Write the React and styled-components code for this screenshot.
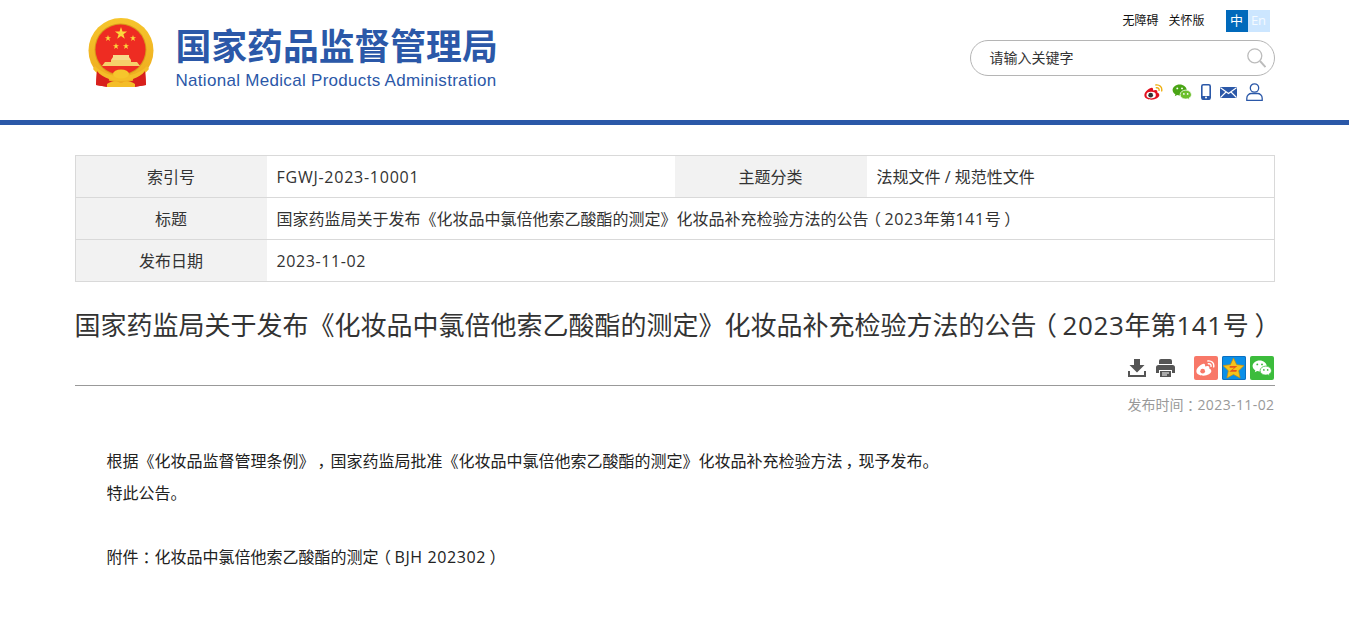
import React from "react";
import styled, { createGlobalStyle } from "styled-components";

const Global = createGlobalStyle`
  html, body { margin: 0; padding: 0; background: #fff; }
  body { font-family: "Open Sans", "Noto Sans CJK SC", sans-serif; color: #333; overflow-x: hidden; }
`;
const Header = styled.header`
  height: 120px; border-bottom: 5px solid #2b58a8;
`;
const HeaderInner = styled.div`
  width: 1200px; margin: 0 auto; height: 120px; display: flex; justify-content: space-between;
`;
const Brand = styled.div`
  display: flex; padding: 18px 0 0 13px; gap: 22px; align-items: flex-start;
`;
const BrandText = styled.div`
  display: flex; flex-direction: column; color: #2b58a8; padding-top: 4px;
`;
const BrandCn = styled.div`
  font-family: "Noto Sans CJK SC", sans-serif; font-weight: 700; font-size: 35.8px; line-height: 44px; white-space: nowrap;
`;
const BrandEn = styled.div`
  font-family: "Liberation Sans", sans-serif; font-size: 17px; line-height: 20px; margin-top: 5px; letter-spacing: .3px; white-space: nowrap;
`;
const Tools = styled.div`
  width: 305px; display: flex; flex-direction: column; align-items: flex-end;
`;
const TopLinks = styled.div`
  display: flex; align-items: center; margin-top: 10px; height: 22px; padding-right: 5px;
`;
const TopLink = styled.span`
  font-size: 12px; color: #111; margin-right: 10px; line-height: 22px;
`;
const Lang = styled.span`
  width: 22px; height: 22px; padding-bottom: 3px; box-sizing: border-box; display: flex; align-items: center; justify-content: center; font-size: 13px;
  background: ${p => p.$on ? "#0069bb" : "#cce6ff"}; color: ${p => p.$on ? "#fff" : "#f4faff"};
`;
const LangGroup = styled.div`display: flex; margin-left: 11px;`;
const Search = styled.div`
  height: 34px; width: 276px; margin-top: 8px; border: 1px solid #b5b5b5; border-radius: 18px; display: flex; align-items: center; justify-content: space-between; padding: 0 8px 0 19px;
`;
const SearchText = styled.span`font-size: 14px; line-height: 32px; color: #333;`;
const Socials = styled.div`
  display: flex; align-items: center; height: 24px; margin-top: 4px; padding-right: 12px; gap: 9px;
`;
const Main = styled.main`
  width: 1200px; margin: 30px auto 0;
`;
const Meta = styled.div`
  display: grid; grid-template-columns: 191px 408px 192px 1fr; border: 1px solid #d9d9d9; border-bottom: 0; box-sizing: border-box;
`;
const Label = styled.div`
  height: 39px; padding-top: 2px; border-bottom: 1px solid #d9d9d9; background: #f2f2f2; display: flex; align-items: flex-start; justify-content: center; font-size: 16px; line-height: 39px; color: #333;
`;
const Value = styled.div`
  height: 39px; padding: 2px 0 0 10px; border-bottom: 1px solid #d9d9d9; font-size: 16px; line-height: 39px; color: #333; white-space: pre;
  ${p => p.$wide && "grid-column: 2 / 5;"}
`;
const Title = styled.h1`
  margin: 0; padding-top: 23px; font-size: 26px; line-height: 40px; font-weight: 400; color: #333; white-space: nowrap;
`;
const Actions = styled.div`
  height: 41px; padding: 11px 1px 0 0; box-sizing: border-box; border-bottom: 1px solid #999; display: flex; align-items: flex-start; justify-content: flex-end; gap: 4px;
`;
const ActionGroup = styled.div`display: flex; gap: 10px; margin-right: 15px; padding-top: 3px;`;
const Share = styled.span`
  width: 24px; height: 24px; border-radius: 2px; display: flex; align-items: center; justify-content: center; background: ${p => p.$bg};
  ${p => p.$edge && `box-shadow: inset 0 0 0 1px ${p.$edge};`}
`;
const PublishDate = styled.div`
  text-align: right; font-size: 14px; color: #999; line-height: 20px; margin-top: 9px;
`;
const Article = styled.article`
  margin-top: 30px; font-size: 16px; color: #222;
`;
const Para = styled.p`
  margin: 0; text-indent: 32px; line-height: 32px; min-height: 32px; white-space: nowrap;
`;
const Punct = styled.span`
  display: inline-block; width: 1em; text-align: center; text-indent: 0; font-feature-settings: "palt";
`;
const Latin = styled.span`
  letter-spacing: ${p => p.$track}px;
`;

const Rich = ({ text, track = 0 }) =>
  text.split(/([（），：]|[A-Za-z0-9\-]+(?: [A-Za-z0-9\-]+)*)/).filter(Boolean).map((part, i) =>
    /^[（），：]$/.test(part) ? <Punct key={i}>{part}</Punct>
    : /^[A-Za-z0-9\-]/.test(part) ? <Latin key={i} $track={track}>{part}</Latin>
    : <React.Fragment key={i}>{part}</React.Fragment>
  );

const Emblem = () => (
  <svg width="66" height="70" viewBox="0 0 66 70">
    <defs>
      <linearGradient id="gold" x1="0" y1="0" x2="0" y2="1">
        <stop offset="0" stopColor="#f6c52c" /><stop offset="1" stopColor="#eeab1e" />
      </linearGradient>
    </defs>
    <path d="M9 49 L8 67 L20 69 L46 69 L58 67 L57 49 Z" fill="#d8201c" />
    <circle cx="33" cy="32.500" r="32.500" fill="url(#gold)" />
    <circle cx="32.500" cy="31.500" r="26" fill="#d99a1a" />
    <circle cx="32.500" cy="31.500" r="25" fill="#ee2c22" />
    <path d="M33 9l1.500 4.500h4.600l-3.700 2.800 1.400 4.500-3.800-2.800-3.800 2.800 1.400-4.500-3.700-2.800h4.600z" fill="#fcd83c" />
    <path d="M20 17l.8 2.200h2.300l-1.900 1.400.7 2.300-1.900-1.400-1.900 1.400.7-2.300-1.900-1.400h2.300zM45 17l.8 2.200h2.300l-1.900 1.400.7 2.300-1.900-1.400-1.900 1.400.7-2.300-1.900-1.400h2.300zM28 25l.8 2.200h2.300l-1.900 1.400.7 2.300-1.900-1.400-1.900 1.400.7-2.300-1.900-1.400h2.300zM38 25l.8 2.200h2.300l-1.900 1.400.7 2.300-1.900-1.400-1.900 1.400.7-2.300-1.900-1.400h2.300z" fill="#fcd83c" />
    <path d="M25 37h16v2l2 3H23l2-3z" fill="#f8d98a" />
    <path d="M23 42h20v2h6l3 4H14l3-4h6z" fill="#f6cf6a" />
    <path d="M7 48c7 7 16 10 26 10s19-3 26-10l2 3c-6 8-17 12-28 12S11 59 5 51z" fill="#f4bd28" />
    <path d="M9 53c3 4 7 6 12 8l-1 8-12-2zM57 53c-3 4-7 6-12 8l1 8 12-2z" fill="#d8201c" />
    <ellipse cx="33" cy="56" rx="8" ry="4.500" fill="#f6c52c" />
    <path d="M19 66c5-3 9-3 14-1 5-2 9-2 14 1v3H19z" fill="#f4bd28" />
  </svg>
);
const SearchIcon = () => (
  <svg width="19" height="20" viewBox="0 0 19 20" fill="none" stroke="#bcbcbc" strokeWidth="1.300">
    <circle cx="7.800" cy="7.800" r="7" /><path d="M13 13 L18.500 19" strokeWidth="1.900" />
  </svg>
);
const Weibo = ({ c = "#e2101e", ear = "#eeb011", w = 19, h = 16, pupil = "#333" }) => (
  <svg width={w} height={h} viewBox="0 0 20 17">
    <path d="M8 4C3.500 5.300.3 9 .3 12c0 3 3.700 4.700 7.700 4.700s8.200-2.500 8.200-5c0-1.700-1.600-2.300-2.300-2.600.5-1.500.2-2.800-1.700-2.800-1.100 0-1.800.4-2.500.6-.2-.6.100-3.300-1.700-2.900z" fill={c} />
    <ellipse cx="7.500" cy="11.800" rx="5" ry="3.500" fill="#fff" />
    <circle cx="7" cy="11.900" r="2.500" fill={pupil} />
    <path d="M12.500 1c3.800-.6 7 2.500 6.200 6.300M13 4c1.900-.3 3.200.9 2.900 2.800" fill="none" stroke={ear} strokeWidth="1.500" strokeLinecap="round" />
  </svg>
);
const Wechat = ({ a = "#4aa516", b = "#6cbf2c", eye = "#fff", w = 20, h = 16, ring = "#fff" }) => (
  <svg width={w} height={h} viewBox="0 0 20 17">
    <path d="M7.500 0.500C3.400 0.500 0 3.200 0 6.500c0 2 1.200 3.600 3 4.700L2.300 13l2.500-1.200c1 .3 1.800.4 2.700.4 4 0 7.500-2.600 7.500-5.700S11.600.5 7.500.5z" fill={a} />
    <path d="M14 6.500c-3.300 0-6 2.100-6 4.800s2.700 4.700 6 4.700c.7 0 1.300-.1 2-.3l2 1-.5-1.600c1.500-1 2.500-2.300 2.500-3.800 0-2.700-2.700-4.800-6-4.800z" fill={b} stroke={ring} strokeWidth=".8" />
    <circle cx="5" cy="4.700" r="1" fill={eye} /><circle cx="10" cy="4.700" r="1" fill={eye} />
    <circle cx="12" cy="10.500" r=".9" fill={eye} /><circle cx="16" cy="10.500" r=".9" fill={eye} />
  </svg>
);
const Phone = () => (
  <svg width="10" height="16" viewBox="0 0 10 16"><rect x="0.800" y="0.800" width="8.400" height="14.400" rx="1.500" fill="none" stroke="#2b58a8" strokeWidth="1.600" /><rect x="1" y="12" width="8" height="3.500" fill="#2b58a8" /><circle cx="5" cy="13.600" r="1" fill="#fff" /></svg>
);
const Mail = () => (
  <svg width="17" height="11" viewBox="0 0 17 11"><rect width="17" height="11" rx="1" fill="#2b58a8" /><path d="M.5 .8 8.500 6.500l8-5.700M.5 10.500 6 5M16.500 10.500 11 5" fill="none" stroke="#fff" strokeWidth="1.100" /></svg>
);
const User = () => (
  <svg width="17" height="18" viewBox="0 0 17 18" fill="none" stroke="#2b58a8" strokeWidth="1.300"><circle cx="8.500" cy="5" r="4.200" /><path d="M.8 17.300v-2c0-3 2.500-4.800 4.500-4.800h6.400c2 0 4.500 1.800 4.500 4.800v2z" /></svg>
);
const Download = () => (
  <svg width="18" height="18" viewBox="0 0 18 18" fill="#555"><path d="M6 0h6v6h4.500L9 13.500 1.500 6H6z" /><path d="M0 12h2v4h14v-4h2v6H0z" /></svg>
);
const Printer = () => (
  <svg width="19" height="18" viewBox="0 0 19 18" fill="#555"><path d="M5 0h9a2 2 0 0 1 2 2v3H3V2a2 2 0 0 1 2-2z" /><path d="M2.500 6h14A2.500 2.500 0 0 1 19 8.500V14h-3v-3H3v3H0V8.500A2.500 2.500 0 0 1 2.500 6z" /><path d="M4 12h11v6H4z" /><path d="M6 13.500h7v1H6zM6 15.500h5v1H6z" fill="#fff" /></svg>
);
const QzoneStar = () => (
  <svg width="23" height="22" viewBox="0 0 24 23"><path d="M12 1l3.300 7 7.700 1-5.600 5.300 1.500 7.700-6.900-3.800-6.900 3.800 1.500-7.700L1 9l7.700-1z" fill="#f6c31c" stroke="#c98a0a" strokeWidth=".7" /><path d="M8 9.500h8l-5 4h4.500l-.5 1.800H7.500l5.300-4H8z" fill="#e8541c" /></svg>
);

const TITLE = "国家药监局关于发布《化妆品中氯倍他索乙酸酯的测定》化妆品补充检验方法的公告（2023年第141号）";

export default function App() {
  return (
    <>
      <Global />
      <Header>
        <HeaderInner>
          <Brand>
            <Emblem />
            <BrandText>
              <BrandCn>国家药品监督管理局</BrandCn>
              <BrandEn>National Medical Products Administration</BrandEn>
            </BrandText>
          </Brand>
          <Tools>
            <TopLinks>
              <TopLink>无障碍</TopLink>
              <TopLink>关怀版</TopLink>
              <LangGroup><Lang $on>中</Lang><Lang>En</Lang></LangGroup>
            </TopLinks>
            <Search>
              <SearchText>请输入关键字</SearchText>
              <SearchIcon />
            </Search>
            <Socials>
              <Weibo />
              <Wechat />
              <Phone />
              <Mail />
              <User />
            </Socials>
          </Tools>
        </HeaderInner>
      </Header>
      <Main>
        <Meta>
          <Label>索引号</Label><Value><Rich text="FGWJ-2023-10001" track={.75} /></Value>
          <Label>主题分类</Label><Value>法规文件 / 规范性文件</Value>
          <Label>标题</Label><Value $wide><Rich text={TITLE} track={.6} /></Value>
          <Label>发布日期</Label><Value $wide><Rich text="2023-11-02" track={.6} /></Value>
        </Meta>
        <Title><Rich text={TITLE} track={.6} /></Title>
        <Actions>
          <ActionGroup><Download /><Printer /></ActionGroup>
          <Share $bg="#f87868"><Weibo c="#fff" ear="#fff" pupil="#f87868" /></Share>
          <Share $bg="#0a8fe8" $edge="#0b6fc0"><QzoneStar /></Share>
          <Share $bg="#3cbc3c"><Wechat a="#fff" b="#fff" eye="#3cbc3c" ring="#3cbc3c" /></Share>
        </Actions>
        <PublishDate><Rich text="发布时间：2023-11-02" track={.4} /></PublishDate>
        <Article>
          <Para><Rich text="根据《化妆品监督管理条例》，国家药监局批准《化妆品中氯倍他索乙酸酯的测定》化妆品补充检验方法，现予发布。" /></Para>
          <Para>特此公告。</Para>
          <Para />
          <Para><Rich text="附件：化妆品中氯倍他索乙酸酯的测定（BJH 202302）" track={.6} /></Para>
        </Article>
      </Main>
    </>
  );
}
